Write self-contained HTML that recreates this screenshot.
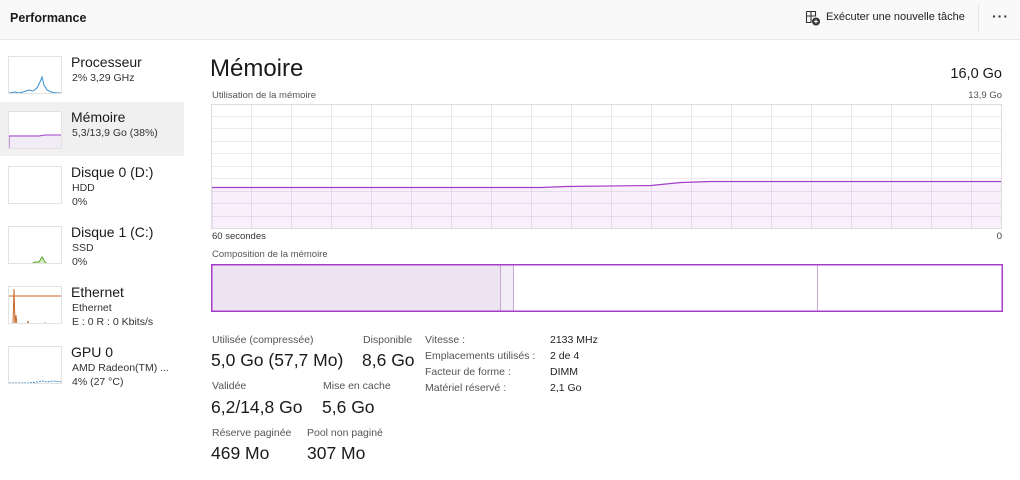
<!DOCTYPE html>
<html><head><meta charset="utf-8"><style>
*{margin:0;padding:0;box-sizing:border-box}
body{width:1020px;height:480px;overflow:hidden;background:#fff;font-family:"Liberation Sans",sans-serif;color:#1a1a1a;position:relative}
.a{position:absolute;white-space:nowrap}
.top{left:0;top:0;width:1020px;height:40px;background:#f9f9f9;border-bottom:1px solid #e8e8e8}
.th{left:8px;top:56px;width:54px;height:38px;border:1px solid #e2e2e2;background:#fff;overflow:hidden}
.n{font-size:14px;color:#1a1a1a}
.s{font-size:10.5px;color:#333}
.lb{font-size:10.5px;color:#555}
.v{font-size:17.5px;color:#1a1a1a}
.k{font-size:10.5px;color:#555}
.kv{font-size:10.5px;color:#222}
</style></head><body>
<div class="a top"></div>
<div class="a" style="left:10px;top:11px;font-size:12.5px;font-weight:bold;color:#1a1a1a">Performance</div>
<svg class="a" style="left:805px;top:10px" width="16" height="16" viewBox="0 0 16 16"><path d="M1.5 1.5h9v5M1.5 1.5v11h5M1.5 6h9M6 1.5v11" fill="none" stroke="#333" stroke-width="1.1"/><circle cx="11" cy="11.5" r="4" fill="#333"/><path d="M11 9.5v4M9 11.5h4" stroke="#fff" stroke-width="1.1"/></svg>
<div class="a" style="left:826px;top:11px;font-size:11px;color:#222">Exécuter une nouvelle tâche</div>
<div class="a" style="left:978px;top:5px;width:1px;height:28px;background:#e5e5e5"></div>
<div class="a" style="left:992px;top:8px;font-size:14px;font-weight:bold;letter-spacing:1px;color:#333">···</div>

<div class="a" style="left:0;top:102px;width:184px;height:54px;background:#f0f0f0"></div>
<!-- thumbs -->
<div class="a th" style="top:56px"><svg width="54" height="38"><polyline points="0,36 6,35 10,36 14,35 20,33 24,34 28,31 31,25 33,20 35,28 38,33 42,35 48,36 54,36" fill="none" stroke="#3a8fd0" stroke-width="1"/></svg></div>
<div class="a th" style="top:111px"><svg width="54" height="38"><rect x="0" y="23" width="54" height="15" fill="#f1ecf5"/><polyline points="0,38 0,24 30,24 36,23 54,23" fill="none" stroke="#a43fc8" stroke-width="1"/></svg></div>
<div class="a th" style="top:166px"></div>
<div class="a th" style="top:226px"><svg width="54" height="38"><polygon points="20,38 26,35 30,35 33,30 36,35 40,38" fill="#d6edc0"/><polyline points="20,38 26,35 30,35 33,30 36,35 40,38" fill="none" stroke="#5ba52a" stroke-width="1"/></svg></div>
<div class="a th" style="top:286px"><svg width="54" height="38"><line x1="0" y1="9" x2="54" y2="9" stroke="#c8692a" stroke-width="1"/><polyline points="4,38 5,2 6,38 7,28 8,38 18,38 19,34 20,38 35,38 36,36 37,38" fill="none" stroke="#c8692a" stroke-width="1"/></svg></div>
<div class="a th" style="top:346px"><svg width="54" height="38"><polyline points="0,36 20,36 28,35 34,34 38,35 44,34 54,35" fill="none" stroke="#3a8fd0" stroke-width="1" stroke-dasharray="2,1"/></svg></div>

<div class="a n" style="left:71px;top:54px">Processeur</div>
<div class="a s" style="left:72px;top:72px">2% 3,29 GHz</div>
<div class="a n" style="left:71px;top:109px">Mémoire</div>
<div class="a s" style="left:72px;top:127px">5,3/13,9 Go (38%)</div>
<div class="a n" style="left:71px;top:164px">Disque 0 (D:)</div>
<div class="a s" style="left:72px;top:182px">HDD</div>
<div class="a s" style="left:72px;top:196px">0%</div>
<div class="a n" style="left:71px;top:224px">Disque 1 (C:)</div>
<div class="a s" style="left:72px;top:242px">SSD</div>
<div class="a s" style="left:72px;top:256px">0%</div>
<div class="a n" style="left:71px;top:284px">Ethernet</div>
<div class="a s" style="left:72px;top:302px">Ethernet</div>
<div class="a s" style="left:72px;top:316px">E : 0 R : 0 Kbits/s</div>
<div class="a n" style="left:71px;top:344px">GPU 0</div>
<div class="a s" style="left:72px;top:362px">AMD Radeon(TM) ...</div>
<div class="a s" style="left:72px;top:376px">4% (27 °C)</div>

<div class="a" style="left:210px;top:55px;font-size:24px;color:#1a1a1a">Mémoire</div>
<div class="a" style="right:18px;top:66px;font-size:14.5px;color:#1a1a1a">16,0 Go</div>
<div class="a lb" style="left:212px;top:90px;font-size:9.5px">Utilisation de la mémoire</div>
<div class="a lb" style="right:18px;top:90px;font-size:9.5px">13,9 Go</div>

<svg class="a" style="left:211px;top:104px" width="791" height="125">
<g stroke="#ebe8ee" stroke-width="1">
<line x1="0" y1="12.5" x2="791" y2="12.5"/><line x1="0" y1="24.5" x2="791" y2="24.5"/><line x1="0" y1="37.5" x2="791" y2="37.5"/><line x1="0" y1="49.5" x2="791" y2="49.5"/><line x1="0" y1="62.5" x2="791" y2="62.5"/><line x1="0" y1="74.5" x2="791" y2="74.5"/><line x1="0" y1="87.5" x2="791" y2="87.5"/><line x1="0" y1="99.5" x2="791" y2="99.5"/><line x1="0" y1="112.5" x2="791" y2="112.5"/>
<line x1="40.5" y1="0" x2="40.5" y2="125"/><line x1="80.5" y1="0" x2="80.5" y2="125"/><line x1="120.5" y1="0" x2="120.5" y2="125"/><line x1="160.5" y1="0" x2="160.5" y2="125"/><line x1="200.5" y1="0" x2="200.5" y2="125"/><line x1="240.5" y1="0" x2="240.5" y2="125"/><line x1="280.5" y1="0" x2="280.5" y2="125"/><line x1="320.5" y1="0" x2="320.5" y2="125"/><line x1="360.5" y1="0" x2="360.5" y2="125"/><line x1="400.5" y1="0" x2="400.5" y2="125"/><line x1="440.5" y1="0" x2="440.5" y2="125"/><line x1="480.5" y1="0" x2="480.5" y2="125"/><line x1="520.5" y1="0" x2="520.5" y2="125"/><line x1="560.5" y1="0" x2="560.5" y2="125"/><line x1="600.5" y1="0" x2="600.5" y2="125"/><line x1="640.5" y1="0" x2="640.5" y2="125"/><line x1="680.5" y1="0" x2="680.5" y2="125"/><line x1="720.5" y1="0" x2="720.5" y2="125"/><line x1="760.5" y1="0" x2="760.5" y2="125"/>
</g>
<polygon points="0,125 0,83 330,83 355,82 440,81 470,78 500,77 791,77 791,125" fill="#a43fc8" fill-opacity="0.08"/>
<polyline points="0.5,125 0.5,83.5 330,83.5 355,82.5 440,81.5 470,78.5 500,77.5 791,77.5" fill="none" stroke="#a43fc8" stroke-width="1.2"/>
<rect x="0.5" y="0.5" width="790" height="124" fill="none" stroke="#ddd"/>
</svg>
<div class="a lb" style="left:212px;top:231px;font-size:9.5px;color:#333">60 secondes</div>
<div class="a lb" style="right:18px;top:231px;font-size:9.5px;color:#333">0</div>
<div class="a lb" style="left:212px;top:249px;font-size:9.5px">Composition de la mémoire</div>

<svg class="a" style="left:211px;top:264px" width="792" height="48">
<rect x="1" y="1" width="288" height="46" fill="#ede4f2"/>
<rect x="289" y="1" width="13" height="46" fill="#f3eef6"/>
<line x1="289.5" y1="1" x2="289.5" y2="47" stroke="#c9a6d8"/>
<line x1="302.5" y1="1" x2="302.5" y2="47" stroke="#c9a6d8"/>
<line x1="606.5" y1="1" x2="606.5" y2="47" stroke="#c9a6d8"/>
<rect x="0.75" y="0.75" width="790.5" height="46.5" fill="none" stroke="#a43fc8" stroke-width="1.5"/>
</svg>

<div class="a lb" style="left:212px;top:334px">Utilisée (compressée)</div>
<div class="a v" style="left:211px;top:350px">5,0 Go (57,7 Mo)</div>
<div class="a lb" style="left:363px;top:334px">Disponible</div>
<div class="a v" style="left:362px;top:350px">8,6 Go</div>
<div class="a lb" style="left:212px;top:380px">Validée</div>
<div class="a v" style="left:211px;top:397px">6,2/14,8 Go</div>
<div class="a lb" style="left:323px;top:380px">Mise en cache</div>
<div class="a v" style="left:322px;top:397px">5,6 Go</div>
<div class="a lb" style="left:212px;top:427px">Réserve paginée</div>
<div class="a v" style="left:211px;top:443px">469 Mo</div>
<div class="a lb" style="left:307px;top:427px">Pool non paginé</div>
<div class="a v" style="left:307px;top:443px">307 Mo</div>

<div class="a k" style="left:425px;top:334px">Vitesse :</div>
<div class="a k" style="left:425px;top:350px">Emplacements utilisés :</div>
<div class="a k" style="left:425px;top:366px">Facteur de forme :</div>
<div class="a k" style="left:425px;top:382px">Matériel réservé :</div>
<div class="a kv" style="left:550px;top:334px">2133 MHz</div>
<div class="a kv" style="left:550px;top:350px">2 de 4</div>
<div class="a kv" style="left:550px;top:366px">DIMM</div>
<div class="a kv" style="left:550px;top:382px">2,1 Go</div>
</body></html>
